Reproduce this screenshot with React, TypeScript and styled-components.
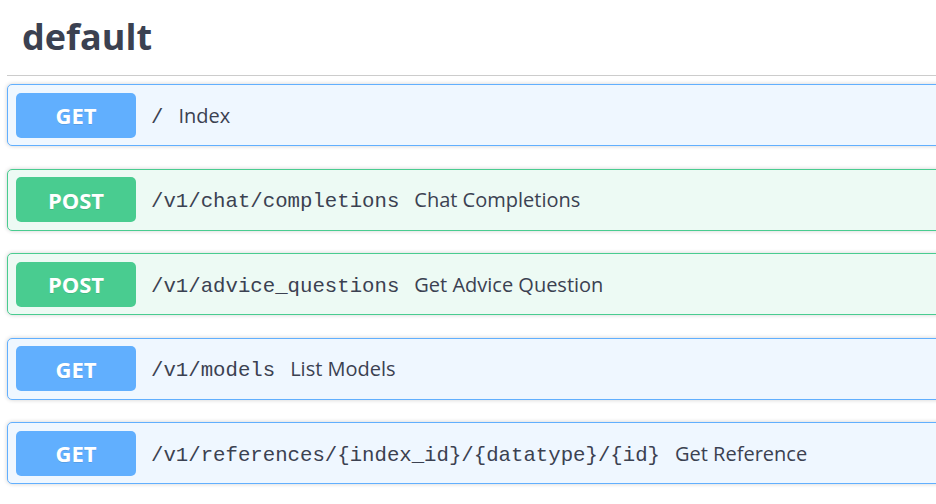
import styled, { createGlobalStyle } from "styled-components";

const GlobalStyle = createGlobalStyle`
    body {
        margin: 0;
        background: #ffffff;
        font-family: "Open Sans", "Noto Sans", sans-serif;
        color: #3b4151;
        overflow: hidden;
    }
`;

const Page = styled.div`
    padding: 0 0 0 7px;
    width: 960px;
`;

const TagHeading = styled.h3`
    margin: 0 0 8px;
    padding: 12px 0 13px 15px;
    font-size: 36px;
    font-weight: 700;
    line-height: 50px;
    color: #3b4151;
    border-bottom: 1px solid #cccccc;
`;

const methodColors: Record<string, { main: string; bg: string }> = {
    GET: { main: "#61affe", bg: "#eff7ff" },
    POST: { main: "#49cc90", bg: "#edfaf4" },
};

const Block = styled.div<{ $method: string }>`
    display: flex;
    align-items: center;
    height: 62px;
    box-sizing: border-box;
    margin-bottom: 22.5px;
    padding: 0 8px;
    border: 1px solid ${(p) => methodColors[p.$method].main};
    border-radius: 5px;
    background: ${(p) => methodColors[p.$method].bg};
    box-shadow: 0 0 4px rgba(0, 0, 0, 0.19);
`;

const Method = styled.span<{ $method: string }>`
    display: flex;
    align-items: center;
    justify-content: center;
    width: 120px;
    height: 45px;
    border-radius: 5px;
    background: ${(p) => methodColors[p.$method].main};
    color: #ffffff;
    font-size: 22px;
    font-weight: 700;
    text-shadow: 0 1px 0 rgba(0, 0, 0, 0.1);
`;

const Path = styled.span`
    padding: 4px 15px 0;
    font-family: "Liberation Mono", "Courier New", monospace;
    font-size: 20.7px;
    color: #3b4151;
`;

const Description = styled.span`
    font-size: 20px;
    color: #3b4151;
`;

const endpoints = [
    { method: "GET", path: "/", summary: "Index" },
    { method: "POST", path: "/v1/chat/completions", summary: "Chat Completions" },
    { method: "POST", path: "/v1/advice_questions", summary: "Get Advice Question" },
    { method: "GET", path: "/v1/models", summary: "List Models" },
    { method: "GET", path: "/v1/references/{index_id}/{datatype}/{id}", summary: "Get Reference" },
];

const App = () => {
    return (
        <Page>
            <GlobalStyle />
            <TagHeading>default</TagHeading>
            {endpoints.map((e) => (
                <Block key={e.path} $method={e.method}>
                    <Method $method={e.method}>{e.method}</Method>
                    <Path>{e.path}</Path>
                    <Description>{e.summary}</Description>
                </Block>
            ))}
        </Page>
    );
};

export default App;
